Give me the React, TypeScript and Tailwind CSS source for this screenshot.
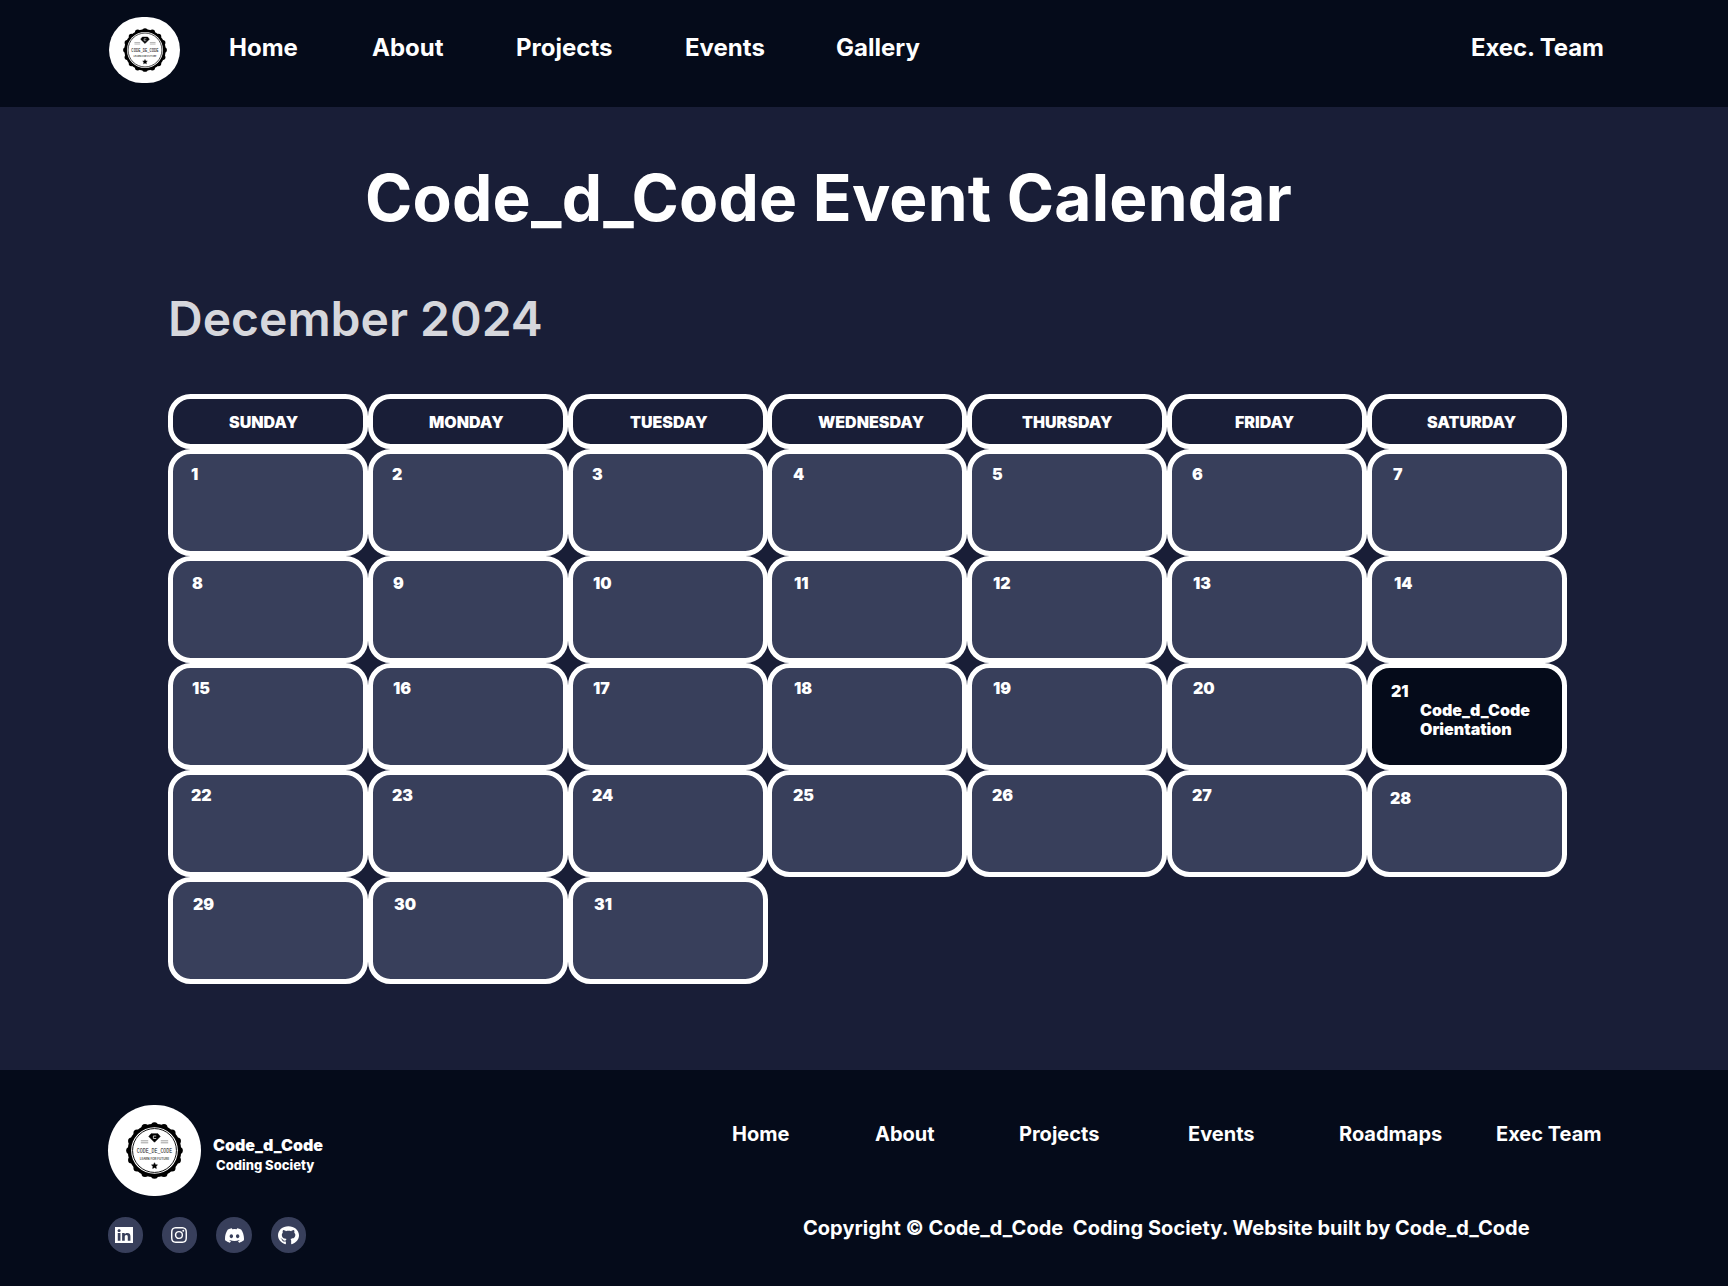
import { FaGithub } from "react-icons/fa";
import { BsInstagram, BsDiscord } from "react-icons/bs";

type Day = { n: number; x: number; y: number };

const weekdays: { name: string; pad: string }[] = [
  { name: "SUNDAY", pad: "pl-[56px]" },
  { name: "MONDAY", pad: "pl-[56px]" },
  { name: "TUESDAY", pad: "pl-[57px]" },
  { name: "WEDNESDAY", pad: "pl-[46px]" },
  { name: "THURSDAY", pad: "pl-[50px]" },
  { name: "FRIDAY", pad: "pl-[63px]" },
  { name: "SATURDAY", pad: "pl-[55px]" },
];

const xs = [
  [18, 19, 19, 21, 20, 20, 21],
  [19, 20, 20, 22, 21, 21, 22],
  [19, 20, 20, 22, 21, 21, 19],
  [18, 19, 19, 21, 20, 20, 18],
  [20, 21, 21],
];
const ys = [11, 13, 11, 11, 13];

const days: Day[] = Array.from({ length: 31 }, (_, i) => {
  const row = Math.floor(i / 7);
  const n = i + 1;
  return { n, x: xs[row][i % 7], y: ys[row] + (n === 21 || n === 28 ? 3 : 0) };
});

const scallops = Array.from({ length: 16 }, (_, i) => (i * Math.PI) / 8);

function Badge({ className }: { className: string }) {
  return (
    <svg viewBox="0 0 100 100" className={className}>
      <circle cx="50" cy="50" r="47" fill="#000" />
      {scallops.map((a) => (
        <circle key={a} cx={50 + 43.5 * Math.sin(a)} cy={50 - 43.5 * Math.cos(a)} r="6.2" fill="#000" />
      ))}
      <circle cx="50" cy="50" r="41" fill="#fff" />
      <circle cx="50" cy="50" r="38.5" fill="none" stroke="#000" strokeWidth="1.6" />
      <path d="M44 20.500h12l4 5-10 10-10-10z" fill="#000" stroke="#000" strokeWidth="1" />
      <path d="M53 24.500h-5v4.500h5" fill="none" stroke="#fff" strokeWidth="1.3" />
      <path d="M26 33h13M26 36.500h13M61 33h13M61 36.500h13" stroke="#444" strokeWidth="0.9" />
      <text x="50" y="54" textAnchor="middle" fontSize="11" textLength="62" lengthAdjust="spacingAndGlyphs" fontFamily="Liberation Mono, monospace" fill="#111">
        CODE_DE_CODE
      </text>
      <text x="50" y="67" textAnchor="middle" fontSize="5" textLength="52" lengthAdjust="spacingAndGlyphs" fontFamily="Inter, sans-serif" fontWeight="500" fill="#111">
        LEARN FOR FUTURE
      </text>
      <path d="M50 71.500l1.600 3.300 3.600.5-2.600 2.500.6 3.600-3.200-1.700-3.200 1.700.6-3.600-2.600-2.500 3.600-.5z" fill="#000" stroke="#000" />
    </svg>
  );
}

function LinkedIn() {
  return (
    <svg viewBox="0 32 448 448" preserveAspectRatio="none" className="h-4 w-[18px]" fill="currentColor" fillRule="evenodd">
      <path d="M0 32h448v448H0zM135.400 416H69V202.200h66.500V416zm-33.200-243c-21.300 0-38.500-17.300-38.500-38.500S80.900 96 102.200 96c21.200 0 38.500 17.300 38.500 38.500 0 21.300-17.200 38.500-38.500 38.500zm282.100 243h-66.400V312c0-24.800-.5-56.700-34.500-56.700-34.600 0-39.900 27-39.900 54.900V416h-66.400V202.200h63.700v29.200h.9c8.900-16.800 30.600-34.500 62.900-34.500 67.200 0 79.700 44.300 79.700 101.900V416z" />
    </svg>
  );
}

export default function App() {
  return (
    <div className="flex h-[1286px] w-[1728px] flex-col overflow-hidden bg-[#191e37] font-['Inter',sans-serif] text-white">
      <header className="flex h-[107px] shrink-0 items-start bg-[#050b1a] pl-[109px]">
        <div className="mt-[17px] flex h-[66px] w-[71px] items-center justify-center rounded-[33px] bg-white">
          <Badge className="size-[44px]" />
        </div>
        <nav className="mt-[33px] flex text-2xl leading-[29px] font-bold whitespace-nowrap">
          <a className="ml-[49px] w-[143px]">Home</a>
          <a className="w-[144px]">About</a>
          <a className="w-[169px]">Projects</a>
          <a className="w-[151px]">Events</a>
          <a className="w-[635px]">Gallery</a>
          <a className="tracking-[-0.1px]">Exec. Team</a>
        </nav>
      </header>

      <main className="h-[963px] shrink-0">
        <h1 className="mt-[52px] ml-[365px] text-[64px] leading-[77px] font-bold tracking-[0.22px] whitespace-nowrap">
          Code_d_Code Event Calendar
        </h1>
        <h2 className="mt-[54px] ml-[168px] text-5xl leading-[58px] font-semibold text-[#d6d7dc]">December 2024</h2>
        <div className="mt-[46px] ml-[168px] grid w-[1399px] grid-cols-[200px_200px_199px_200px_200px_200px_200px] text-base leading-[19px] font-black">
          {weekdays.map((d) => (
            <div key={d.name} className={`h-[55px] w-[200px] rounded-[22.5px] border-[5px] border-white pt-[14px] ${d.pad}`}>
              {d.name}
            </div>
          ))}
          {days.map((d) => (
            <div
              key={d.n}
              className={`h-[107px] w-[200px] rounded-[22.5px] border-[5px] border-white ${d.n === 21 ? "bg-[#050b1a]" : "bg-[#383f5b]"}`}
              style={{ paddingLeft: d.x, paddingTop: d.y }}
            >
              <div>{d.n}</div>
              {d.n === 21 && (
                <div className="ml-[29px]">
                  Code_d_Code
                  <br />
                  Orientation
                </div>
              )}
            </div>
          ))}
        </div>
      </main>

      <footer className="flex flex-1 bg-[#050b1a] pl-[108px]">
        <div className="w-[624px] pt-[35px]">
          <div className="flex">
            <div className="flex h-[91px] w-[93px] items-center justify-center rounded-[46px] bg-white">
              <Badge className="size-[57px]" />
            </div>
            <div className="mt-[30px] ml-[12px]">
              <div className="text-base leading-[20px] font-black">Code_d_Code</div>
              <div className="ml-[3px] text-[13px] leading-[20px] font-extrabold">Coding Society</div>
            </div>
          </div>
          <div className="mt-[21px] flex">
            <span className="mr-[19px] flex h-9 w-[35px] items-center justify-center rounded-full bg-[#383f5b] pr-[3px]">
              <LinkedIn />
            </span>
            <span className="mr-[19px] flex h-9 w-[35px] items-center justify-center rounded-full bg-[#383f5b] pr-px">
              <BsInstagram className="size-4" />
            </span>
            <span className="mr-[19px] flex size-9 items-center justify-center rounded-full bg-[#383f5b]">
              <BsDiscord size={19} />
            </span>
            <span className="flex h-9 w-[35px] items-center justify-center rounded-full bg-[#383f5b]">
              <FaGithub preserveAspectRatio="none" className="h-[19px] w-[21px]" />
            </span>
          </div>
        </div>
        <div className="pt-[52px] text-xl leading-6 font-bold whitespace-nowrap">
          <nav className="flex">
            <a className="w-[143px]">Home</a>
            <a className="w-[144px]">About</a>
            <a className="w-[169px]">Projects</a>
            <a className="w-[151px]">Events</a>
            <a className="w-[157px]">Roadmaps</a>
            <a>Exec Team</a>
          </nav>
          <p className="mt-[70px] ml-[71px] tracking-[0.03px] whitespace-pre">{"Copyright © Code_d_Code  Coding Society. Website built by Code_d_Code"}</p>
        </div>
      </footer>
    </div>
  );
}
